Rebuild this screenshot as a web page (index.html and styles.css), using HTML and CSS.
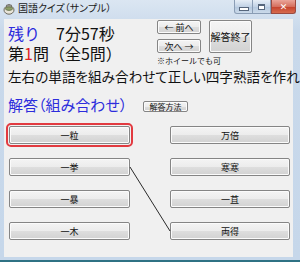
FILE: index.html
```html
<!DOCTYPE html>
<html lang="ja">
<head>
  <meta charset="UTF-8" />
  <meta name="viewport" content="width=device-width, initial-scale=1.0" />
  <title>国語クイズ（サンプル）</title>
  <link rel="stylesheet" href="styles.css">
</head>
<body>
  <div class="window">
    <div class="titlebar">
      <svg class="app-icon" width="12" height="12" viewBox="0 0 12 12">
        <ellipse cx="6" cy="7" rx="5" ry="4.2" fill="#e8e4d8" stroke="#6d6a60" stroke-width="1"/>
        <ellipse cx="6" cy="5.6" rx="3.6" ry="1.8" fill="#8fa06a" stroke="#5d6b45" stroke-width="0.8"/>
        <path d="M3 2.5 Q6 0.5 9 2.5" fill="none" stroke="#6d6a60" stroke-width="1"/>
      </svg>
      <span class="title">国語クイズ（サンプル）</span>
      <div class="controls">
        <span class="ctl ctl-min"><i></i></span>
        <span class="ctl ctl-max"><i></i></span>
        <span class="ctl ctl-close">✕</span>
      </div>
    </div>

    <div class="client">
      <div class="top">
        <div class="status">
          <p><span class="blue">残り</span>　7分57秒</p>
          <p>第<span class="red">1</span>問（全5問）</p>
        </div>
        <div class="nav">
          <button class="btn">← 前へ</button>
          <button class="btn btn-end">解答終了</button>
          <button class="btn">次へ →</button>
          <p class="hint">※ホイールでも可</p>
        </div>
      </div>

      <p class="instruction">左右の単語を組み合わせて正しい四字熟語を作れ</p>

      <div class="answer-head">
        <span class="answer-title blue">解答（組み合わせ）</span>
        <button class="btn btn-small">解答方法</button>
      </div>

      <div class="pairs">
        <button class="btn word focused">一粒</button>
        <button class="btn word">万倍</button>
        <button class="btn word">一挙</button>
        <button class="btn word">寒寒</button>
        <button class="btn word">一暴</button>
        <button class="btn word">一苴</button>
        <button class="btn word">一木</button>
        <button class="btn word">両得</button>
        <svg class="links" width="300" height="120">
          <line x1="126" y1="41" x2="166" y2="105" stroke="#2a2a2a" stroke-width="1"/>
        </svg>
      </div>
    </div>
  </div>
</body>
</html>
```

FILE: styles.css
```css
body {
  margin: 0;
  font-family: "Noto Sans CJK JP", "Noto Sans", sans-serif;
  color: #111;
}

p {
  margin: 0;
}

.window {
  box-sizing: border-box;
  width: 300px;
  height: 262px;
  display: flex;
  flex-direction: column;
  padding: 0 7px 3px 4px;
  background: linear-gradient(#dbe6f2, #c9d9eb 30px, #c6d7ea);
  border-bottom: 2px solid #2f7284;
  overflow: hidden;
}

/* title bar */

.titlebar {
  height: 19px;
  display: flex;
  align-items: flex-start;
  margin-left: -1px;
}

.app-icon {
  margin: 3px 3px 0 0;
}

.title {
  font-size: 10px;
  line-height: 12px;
  margin-top: 2px;
  font-feature-settings: "palt";
  color: #1a1a1a;
}

.controls {
  margin-left: auto;
  margin-right: -3px;
  display: flex;
}

.ctl {
  box-sizing: border-box;
  height: 14px;
  display: flex;
  align-items: center;
  justify-content: center;
  border: 1px solid #8a9db5;
  border-top: 0;
  background: linear-gradient(#e6eef7, #c3d3e6 50%, #b3c7de 51%, #cbdaea);
}

.ctl-min {
  width: 19px;
  border-radius: 0 0 0 3px;
}

.ctl-min i {
  width: 8px;
  height: 2px;
  margin-top: 4px;
  background: #fff;
  border: 1px solid #56667c;
}

.ctl-max {
  width: 18px;
  border-left: 0;
}

.ctl-max i {
  width: 5px;
  height: 4px;
  border: 1px solid #56667c;
  box-shadow: inset 0 1px #56667c;
  background: #fff;
}

.ctl-close {
  width: 25px;
  border-color: #9b4a40;
  border-radius: 0 0 3px 0;
  background: linear-gradient(#eaa59a, #d5705f 50%, #c4402b 51%, #d66b4e);
  color: #fff;
  font-size: 9px;
  font-family: "DejaVu Sans", sans-serif;
  font-weight: bold;
}

/* client area */

.client {
  flex: 1;
  background: #f0f0f0;
  position: relative;
}

.blue {
  color: #2c2cdc;
}

.red {
  color: #e02020;
}

.top {
  height: 47px;
  display: flex;
  padding-left: 4px;
}

.status {
  width: 149px;
  font-size: 16px;
  line-height: 20px;
  padding-top: 4px;
}

.btn {
  box-sizing: border-box;
  font-family: "Noto Sans CJK JP", sans-serif;
  font-size: 9px;
  line-height: 1;
  color: #111;
  padding: 0;
  border: 1px solid #858585;
  border-radius: 2px;
  background: linear-gradient(#f4f4f4, #ececec 50%, #dedede 51%, #d2d2d2);
  box-shadow: inset 0 0 0 1px #fbfbfb;
}

.nav {
  display: grid;
  grid-template-columns: 44px 43px;
  grid-template-rows: 14px 14px auto;
  column-gap: 8px;
  row-gap: 5px;
  padding-top: 1px;
}

.btn-end {
  grid-row: 1 / 3;
  grid-column: 2;
  font-size: 10px;
}

.hint {
  grid-column: 1 / 3;
  font-size: 8px;
  line-height: 8px;
  margin-top: -1px;
}

.instruction {
  font-size: 13.6px;
  line-height: 20px;
  padding-left: 4px;
  white-space: nowrap;
  font-feature-settings: "palt";
}

.answer-head {
  display: flex;
  align-items: center;
  margin-top: 9px;
  padding-left: 4px;
}

.answer-title {
  width: 135px;
  font-size: 15px;
  line-height: 20px;
  font-feature-settings: "palt";
}

.btn-small {
  width: 45px;
  height: 11px;
  margin-top: 3px;
  font-size: 8px;
}

.pairs {
  position: relative;
  margin-top: 11px;
  padding-left: 5px;
  display: grid;
  grid-template-columns: 121px 120px;
  grid-auto-rows: 18px;
  column-gap: 40px;
  row-gap: 14px;
}

.word {
  font-size: 9px;
}

.focused {
  outline: 2px solid #e23a40;
  outline-offset: 1px;
}

.links {
  position: absolute;
  left: 0;
  top: 0;
  pointer-events: none;
}
```
